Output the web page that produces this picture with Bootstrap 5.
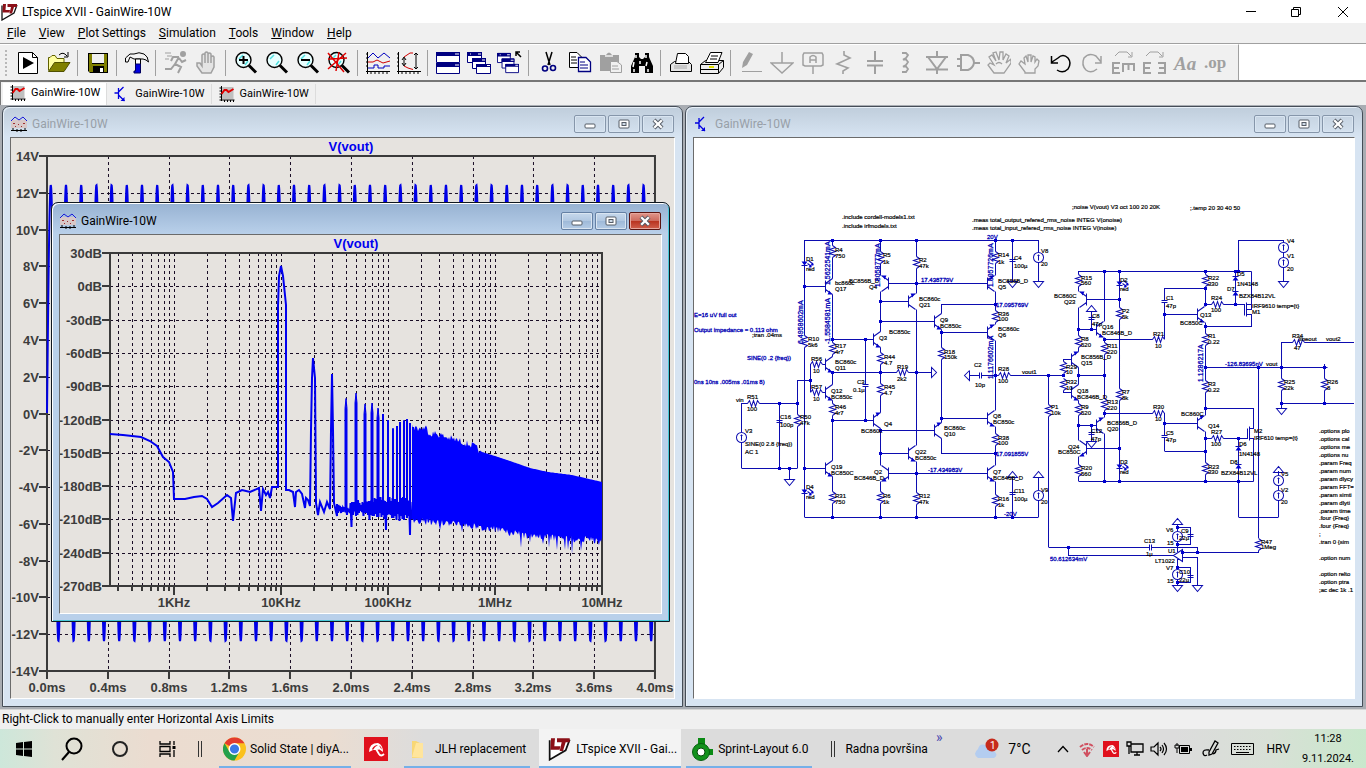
<!DOCTYPE html>
<html lang="en">
<head>
<meta charset="utf-8">
<meta name="viewport" content="width=device-width, initial-scale=1">
<title>LTspice XVII - GainWire-10W</title>
<link href="https://cdn.jsdelivr.net/npm/bootstrap@5.3.0/dist/css/bootstrap.min.css" rel="stylesheet">
<style>
  body { font: 12px/16px Roboto, "Open Sans", sans-serif; color: #000; background: #f0f0f0; }
  button { font: inherit; color: inherit; border: 0; background: none; padding: 0; }
  svg { display: block; flex: none; }
  .app-title { height: 23px; background: #fff; }
  .sys-btn { width: 46px; }
  .app-menu { height: 21px; border-bottom: 1px solid #a0a0a0; padding-left: 2px; }
  .app-menu a { color: #000; text-decoration: none; padding: 0 5px; margin-right: 3px; white-space: nowrap; }
  .tool-row { height: 38px; border-bottom: 2px solid #767676; background: #fff; }
  .tools { background: #f0f0f0; border-right: 1px solid #a0a0a0; padding-right: 7px; border-top: 1px solid #fff; }
  .grip { width: 12px; height: 26px; border-left: 2px dotted #b8b8b8; margin-left: 5px; margin-right: -5px; }
  .tool { width: 31px; height: 34px; display: flex; align-items: center; justify-content: center; }
  .tool-sep { width: 8px; height: 26px; background: linear-gradient(#a0a0a0, #a0a0a0) 3px 0 / 1px 100% no-repeat; }
  .off { color: #a0a0a0; }
  .doc-tabs { height: 23px; padding-left: 2px; border-left: 1px solid #777; font-size: 11px; }
  .doc-tab { height: 20px; padding: 0 6px 0 6px; gap: 5px; display: flex; align-items: center; border-right: 1px solid #dcdcdc; align-self: flex-end; }
  .doc-tab.current { background: #fff; height: 22px; padding-bottom: 2px; }
  .doc-tab:not(.current) { margin-bottom: 1px; }
  .mdi { padding: 1px 3px 2px 2px; gap: 2px; background: #a9adb3; }
  .doc-win { border: 1px solid #454d57; border-radius: 7px 7px 0 0; background: linear-gradient(#bfcddb, #d7e4f2 30px) #d7e4f2; padding: 0 7px 7px; box-shadow: inset 1px 1px 0 #e8f0f8; min-width: 0; }
  .win-left { flex: 681 1 0; }
  .win-right { flex: 678 1 0; }
  .doc-head { height: 30px; padding: 4px 1px 0 1px; color: #98a0a8; gap: 2px; }
  .doc-head .caption-text { flex: 1; margin-left: 3px; }
  .win-btn { width: 32px; height: 18px; border: 1px solid #8696aa; border-radius: 2px; box-shadow: inset 0 0 0 1px #d9e5f1; display: flex; align-items: center; justify-content: center; }
  .client { border: 1px solid #fff; border-top-color: #6b6b6b; border-left-color: #6b6b6b; background: #e6e3df; overflow: hidden; }
  .client.paper { background: #fff; }
  .client svg { width: 100%; height: 100%; }
  .float-win { position: absolute; left: 51px; top: 97px; width: 619px; height: 420px; border-color: #101820; background: linear-gradient(#97b2d2, #b9d0ea 31px) #bad1eb; box-shadow: inset 1px 1px 0 #fff, inset -1px -1px 0 #48c8d8; }
  .float-win .doc-head { height: 31px; color: #000; }
  .float-win .win-btn { border-color: #6480a4; background: linear-gradient(#c6d8ec, #b0c7e1 50%, #9eb9d8 50%, #b5cce6); }
  .float-win .win-btn.shut { border-color: #5a1410; background: linear-gradient(#e0968a, #cc6a5c 50%, #b8321e 50%, #d0604c); box-shadow: inset 0 0 0 1px #e6a79d; }
  .axis-text { font: bold 13px "Liberation Sans", Arial, sans-serif; fill: #3c3c3c; }
  .trace-name { font: bold 13px "Liberation Sans", Arial, sans-serif; fill: #0000f0; }
  .sch text { font: 6px "Liberation Sans", Arial, sans-serif; fill: #000; stroke: #000; stroke-width: .2px; }
  .sch text.op { fill: #0000b4; stroke: #0000b4; stroke-width: .3px; }
  .sch text.amp { font-size: 7px; }
  .status { height: 20px; border-top: 1px solid #d5d5d5; padding: 1px 2px 0; }
  .taskbar { height: 40px; background: linear-gradient(90deg, #cde7da 0, #dfe2d6 4%, #ebdcd0 11%, #ebddd1 24%, #dcdcdc 31%, #dcdcdc 86%, #d8e0d6 93%, #c9e8cc 100%); white-space: nowrap; }
  .tb-icon { width: 48px; height: 40px; display: flex; align-items: center; justify-content: center; }
  .tb-app { height: 40px; display: flex; align-items: center; gap: 5px; border-bottom: 3px solid #76b0e8; padding: 3px 4px 0; margin-right: 5px; }
  .tb-app.chrome-app { padding-right: 2px; gap: 4px; }
  .tb-app.current { background: #f3f3f3; }
  .tray { height: 40px; width: 24px; display: flex; align-items: center; justify-content: center; }
  .temp { font-size: 14px; }
  .clock { font-size: 11px; }
  .more-mark { color: #4a4ab0; font-size: 14px; }
</style>
</head>
<body class="d-flex flex-column vh-100 overflow-hidden">

<svg width="0" height="0" class="position-absolute" aria-hidden="true">
  <defs>
    <symbol id="lt" viewBox="0 0 18 18"><path d="M2 2.500V17L14 10L17 2" fill="#fff" stroke="#111" stroke-width="1.300"/><path d="M3 1H6L5.500 7H10L9.500 9.500H2.500ZM7.500 1H17V4H14L12 10.500H9.500L11 4H7.500Z" fill="#8c1018"/></symbol>
    <symbol id="wave" viewBox="0 0 16 16"><path d="M3 1H15V13H3Z" fill="#c0c0c0"/><path d="M3 0V15M1 14H16M1 2H3M1 5H3M1 8H3M1 11H3M6 14V16M9 14V16M12 14V16M15 14V16" stroke="#000" fill="none"/><path d="M3 8L6 4H8L10 6L15 3" stroke="#e00000" stroke-width="2" fill="none"/></symbol>
    <symbol id="npn" viewBox="0 0 16 16"><path d="M5 2V13M1 7H5M5 6L10 1M5 9L11 15" stroke="#0000e0" stroke-width="1.300" fill="none"/><path d="M11 15V11L7 15Z" fill="#0000e0"/></symbol>
    <symbol id="plotdoc" viewBox="0 0 16 16"><path d="M0 4H16V12H0Z" fill="#d8c8c8"/><path d="M0 5L4 1L8 4L12 1L16 5" stroke="#1818d8" fill="none"/><path d="M2 7.500H4M7 8.500H8M12 7.500H14M4 10.500H5M10 10.500H11" stroke="#a03030"/><path d="M0 14.500H16M2 12V15M6 13V16M10 13V16M14 12V15" stroke="#000"/></symbol>
    <symbol id="bmin" viewBox="0 0 14 12"><rect x="2" y="6" width="10" height="4" rx="1" fill="#fff" stroke="#555c66"/></symbol>
    <symbol id="bmax" viewBox="0 0 14 12"><rect x="2" y="2" width="10" height="8" rx="1" fill="#fff" stroke="#555c66"/><rect x="5" y="4.500" width="4" height="3" fill="#cfdbe8" stroke="#555c66"/></symbol>
    <symbol id="bcls" viewBox="0 0 14 12"><path d="M3 2L11 10M11 2L3 10" stroke="#555c66" stroke-width="4.200"/><path d="M3.200 2.200L10.800 9.800M10.800 2.200L3.200 9.800" stroke="#fff" stroke-width="2.300"/></symbol>
    <symbol id="lens" viewBox="0 0 24 24"><circle cx="9.500" cy="9" r="7.500" fill="#e8ffff" stroke="#000" stroke-width="1.400"/><path d="M5 8L9 4M11 14L14 10" stroke="#50e0e0" stroke-width="1.500"/><path d="M15 14.500L22 21.500" stroke="#000" stroke-width="3"/></symbol>
    <symbol id="cascade" viewBox="0 0 24 24"><g fill="#fff" stroke="#000080"><path d="M.5 1.500H14.500V11.500H.5Z"/><path d="M5.500 7.500H18.500V17.500H5.500Z"/><path d="M9.500 13.500H23.500V22.500H9.500Z"/></g><path d="M0 1H15V5H0ZM5 7H19V11H5ZM9 13H24V16H9Z" fill="#000080"/><path d="M11 3H14M15 9H18M20 14.500H23M3 3H4" stroke="#fff"/></symbol>
    <symbol id="avira" viewBox="0 0 24 24"><path d="M0 0H24V24H0Z" fill="#e0101c"/><path d="M5 15Q5 6 14 6Q19 8 19 15L15.500 12.500L12 13L9 13Z" fill="#fff"/><path d="M8 12Q10 8 14 8Q10 10 9 13ZM15 8.500Q18 10 17.500 12.500Z" fill="#e0101c"/><path d="M12 12L15 17Q17 20 20 17" stroke="#fff" stroke-width="1.800" fill="none"/></symbol>
  </defs>
</svg>

<header class="app-title d-flex align-items-center flex-shrink-0">
  <svg width="18" height="18" class="me-1"><use href="#lt"/></svg>
  <span class="flex-grow-1">LTspice XVII - GainWire-10W</span>
  <button class="sys-btn" aria-label="Minimize"><svg width="12" height="12" class="m-auto"><path d="M1 5.500H11" stroke="#000"/></svg></button>
  <button class="sys-btn" aria-label="Restore"><svg width="12" height="12" class="m-auto"><path d="M.5 3.500H7.500V10.500H.5ZM2.500 3.500V1.500H9.500V8.500H7.500" stroke="#000" fill="none"/></svg></button>
  <button class="sys-btn" aria-label="Close"><svg width="12" height="12" class="m-auto"><path d="M1 1L11 11M11 1L1 11" stroke="#000"/></svg></button>
</header>

<nav class="app-menu d-flex align-items-center flex-shrink-0">
  <a href="#"><u>F</u>ile</a><a href="#"><u>V</u>iew</a><a href="#"><u>P</u>lot Settings</a><a href="#"><u>S</u>imulation</a><a href="#"><u>T</u>ools</a><a href="#"><u>W</u>indow</a><a href="#"><u>H</u>elp</a>
</nav>

<div class="tool-row d-flex flex-shrink-0">
  <div class="tools d-flex align-items-center">
    <span class="grip"></span>
    <button class="tool" aria-label="Run"><svg width="24" height="24"><path d="M2.500 1.500H16.500L21.500 6.500V22.500H2.500Z" fill="#fff" stroke="#000"/><path d="M16.500 1.500V6.500H21.500" fill="none" stroke="#000"/><path d="M7 6L18 12L7 18Z"/></svg></button>
    <button class="tool" aria-label="Open"><svg width="24" height="24"><path d="M1.500 19.500V6.500H3L5 4.500H8L10 7.500H17V11" fill="#ffffa0" stroke="#606000"/><path d="M1.500 20.500L7.500 11.500H23L17 20.500Z" fill="#808000" stroke="#505000"/><path d="M12 4Q16 0 20 5M21 1V6H17" fill="none" stroke="#000"/></svg></button>
    <span class="tool-sep"></span>
    <button class="tool" aria-label="Save"><svg width="24" height="24"><path d="M2 2H22V22H4L2 20Z" fill="#000"/><path d="M3 3H6V13H18V3H21V21H3Z" fill="#808000"/><path d="M6 3H18V12H6Z" fill="#f0f0f0"/><path d="M7 15H18V22H7Z"/><path d="M14 17H17V21H14Z" fill="#fff"/></svg></button>
    <span class="tool-sep"></span>
    <button class="tool" aria-label="Control panel"><svg width="24" height="24"><path d="M.5 7L5 3H9Q14 .5 19 3Q23 5 23.500 11L21 9L18 8H9L5 6L3 11H.5Z" fill="#f4f4f4" stroke="#000"/><path d="M10.500 8H15.500V14H10.500Z" fill="#fff" stroke="#000"/><path d="M10.500 13H15.500V22H9V20H10.500Z" fill="#0000e0" stroke="#000060"/></svg></button>
    <span class="tool-sep"></span>
    <button class="tool off" aria-label="Run simulation"><svg width="24" height="24" fill="none" stroke="#a0a0a0" stroke-width="2"><circle cx="19" cy="3" r="2" fill="#a0a0a0"/><path d="M15 6L11 13L17 16L14 22M11 13L7 18H1M15 6H9L7 10M15 7L18 11L22 9"/><path d="M1 2H7M3 5H8M1 8H5" stroke-width="1"/></svg></button>
    <button class="tool off" aria-label="Halt"><svg width="24" height="24" fill="#e4e4e4" stroke="#a0a0a0" stroke-width="1.500"><path d="M7 22L2 15V12H5L7 15V4Q8.500 2 10 4V12V2Q11.500 0 13 2V12V3Q14.500 1 16 3V12V6Q18 4 19 6V16L16 22Z"/></svg></button>
    <span class="tool-sep"></span>
    <button class="tool" aria-label="Zoom in"><svg width="24" height="24"><use href="#lens"/><path d="M5 9H14M9.500 5V13" stroke="#000" stroke-width="2"/></svg></button>
    <button class="tool" aria-label="Pan"><svg width="24" height="24"><use href="#lens"/></svg></button>
    <button class="tool" aria-label="Zoom out"><svg width="24" height="24"><use href="#lens"/><path d="M5 9H14" stroke="#000" stroke-width="2"/></svg></button>
    <button class="tool" aria-label="Zoom full"><svg width="24" height="24"><use href="#lens"/><path d="M1 2L17 21M19 2L1 18M1 8L20 7M12 1L9 20" stroke="#e00000" stroke-width="1.500"/></svg></button>
    <span class="tool-sep"></span>
    <button class="tool" aria-label="Autorange"><svg width="26" height="24" fill="none"><path d="M2.500 1V23M1 20.500H25M1 3H3M1 7H3M1 11H3M1 15H3M6 20V23M10 20V23M14 20V23M18 20V23M22 20V23" stroke="#000"/><path d="M3 7L8 2L13 7L19 2L25 7" stroke="#0000c0"/><path d="M3 11H8L12 9L18 12L25 10" stroke="#d00000"/><path d="M3 17H9V14H13V17H19V15H25" stroke="#0000c0"/></svg></button>
    <button class="tool" aria-label="Plot limits"><svg width="26" height="24" fill="none"><path d="M2.500 1V23M1 20.500H25M1 3H3M1 7H3M1 11H3M1 15H3M6 20V23M10 20V23M14 20V23M18 20V23M22 20V23M8 7V14M6 9L8 6L10 9M6 12L8 15L10 12M20 2V18M18 4L20 2L22 4M18 16L20 18L22 16" stroke="#000"/><path d="M8 6L14 2H17M8 15L12 17L17 18.500" stroke="#d00000"/></svg></button>
    <span class="tool-sep"></span>
    <button class="tool" aria-label="Tile"><svg width="24" height="24"><path d="M.5 1.500H23.500V11.500H.5ZM.5 12.500H23.500V22.500H.5Z" fill="#fff" stroke="#000080"/><path d="M0 1H24V5H0ZM0 12H24V16H0Z" fill="#000080"/><path d="M19 3H23M19 14H23" stroke="#fff"/></svg></button>
    <button class="tool" aria-label="Cascade"><svg width="24" height="24"><use href="#cascade"/></svg></button>
    <button class="tool" aria-label="Close all"><svg width="26" height="24"><use href="#cascade" width="22" height="24"/><path d="M24 6L19 1M19 5V1H23" stroke="#000" fill="none" stroke-width="1.500"/></svg></button>
    <span class="tool-sep"></span>
    <button class="tool" aria-label="Cut"><svg width="24" height="24" fill="none"><path d="M9 1L13 14M15 1L11 14" stroke="#000" stroke-width="1.500"/><circle cx="8" cy="17.500" r="2.500" stroke="#000080" stroke-width="1.600"/><circle cx="16" cy="17" r="2.500" stroke="#000080" stroke-width="1.600"/></svg></button>
    <button class="tool" aria-label="Copy"><svg width="24" height="24" fill="#fff"><path d="M1.500 1.500H9L13.500 6V16.500H1.500Z" stroke="#000"/><path d="M3 6H8M3 9H9M3 12H9" stroke="#000"/><path d="M10.500 6.500H18L22.500 11V20.500H10.500Z" stroke="#000080" stroke-width="1.300"/><path d="M12 11H17M12 14H20M12 17H20" stroke="#000080"/></svg></button>
    <button class="tool off" aria-label="Paste"><svg width="24" height="24"><path d="M1 4H7Q10 -1 13 4H20V20H1Z" fill="#a0a0a0"/><path d="M6 5H14" stroke="#ddd" stroke-width="2"/><path d="M11.500 10.500H18L22.500 14V21.500H11.500Z" fill="#f0f0f0" stroke="#a0a0a0"/><path d="M13 15H19M13 18H20" stroke="#a0a0a0"/></svg></button>
    <button class="tool" aria-label="Find"><svg width="24" height="24"><path d="M5 2H9V6L11 8H13L15 6V2H19V6L23 15V22H15V15H9V22H1V15L5 6Z"/><path d="M6 4V7M16 4V7M4 11L3 16M10 10V13M17 11L16 15M4 18V21M18 18V21" stroke="#fff" stroke-width="1.500"/></svg></button>
    <span class="tool-sep"></span>
    <button class="tool" aria-label="Print"><svg width="24" height="24"><path d="M1.500 13.500L5.500 10.500H19.500L22.500 13.500V20.500H1.500Z" fill="#e6e6e6" stroke="#000"/><path d="M6.500 12.500L8.500 2.500H16.500L19.500 5.500V12.500Z" fill="#fff" stroke="#000"/><path d="M5 17H18M5 15H18" stroke="#aaa"/></svg></button>
    <button class="tool" aria-label="Print setup"><svg width="24" height="24"><path d="M.5 13.500L5.500 9.500H23.500V16.500L18.500 22.500H.5Z" fill="#eee" stroke="#000"/><path d="M.5 13.500H18.500L23.500 9.500M18.500 13.500V22M1 18.500H18" stroke="#000" fill="none"/><path d="M5.500 11.500L10.500 1.500H22L18 11.500Z" fill="#fff" stroke="#000"/><path d="M11 5H18M10 8H17" stroke="#000"/><path d="M9 16H14" stroke="#e0e000" stroke-width="2"/></svg></button>
    <span class="tool-sep"></span>
    <button class="tool off" aria-label="Wire"><svg width="24" height="24"><path d="M3 17L4 11L10 1L14 3L8 14Z" fill="#a0a0a0"/><path d="M3 20.500H23" stroke="#a0a0a0"/></svg></button>
    <button class="tool off" aria-label="Ground"><svg width="24" height="24" fill="none" stroke="#a0a0a0" stroke-width="1.500"><path d="M12 1V12M1 12H23L12 22Z"/></svg></button>
    <button class="tool off" aria-label="Label net"><svg width="24" height="24" fill="none" stroke="#a0a0a0" stroke-width="1.500"><path d="M3 2H21L22 4V14L20 15H4L2 14V4ZM12 15V23M9 12V6Q12 3 15 6V12M9 9H15"/></svg></button>
    <button class="tool off" aria-label="Resistor"><svg width="24" height="24" fill="none" stroke="#a0a0a0" stroke-width="1.600"><path d="M12 0V4L18 7L5 13L16 17L11 20V23"/></svg></button>
    <button class="tool off" aria-label="Capacitor"><svg width="24" height="24" fill="none" stroke="#a0a0a0" stroke-width="2"><path d="M12 0V9M12 15V23M4 10H20M4 14.500H20"/></svg></button>
    <button class="tool off" aria-label="Inductor"><svg width="24" height="24" fill="none" stroke="#a0a0a0" stroke-width="1.800"><path d="M8 2H12L14 4L12 7L9 8.500H12L14 11L12 14L9 15.500H12L14 18L12 21H8"/></svg></button>
    <button class="tool off" aria-label="Diode"><svg width="24" height="24" fill="none" stroke="#a0a0a0" stroke-width="2"><path d="M12 0V6M1 6H23M3 6L12 18L21 6M1 18.500H23M12 18V23"/></svg></button>
    <button class="tool off" aria-label="Component"><svg width="24" height="24" fill="none" stroke="#a0a0a0" stroke-width="2"><path d="M5 4H12Q18 6 18 12Q17 17 12 19H5ZM1 8H5M1 15H5M18 12H24"/></svg></button>
    <button class="tool off" aria-label="Move"><svg width="24" height="24" fill="none" stroke="#a0a0a0" stroke-width="1.300"><path d="M7 22L1 14L3 12L7 14L2 6L5 4L9 10L6 2L9 1L12 9L13 1H16V9L19 3L22 5L19 12L24 8V12L17 22ZM9 13Q12 10 15 13"/></svg></button>
    <button class="tool off" aria-label="Drag"><svg width="24" height="24" fill="none" stroke="#a0a0a0" stroke-width="1.300"><path d="M7 21L1 13L3 10L7 13L6 7L8 5L10 11V4H13V11L15 5L17 6V11L19 8L21 10L20 15L17 18V22H7Z"/></svg></button>
    <button class="tool" aria-label="Undo"><svg width="24" height="24" fill="none" stroke="#000" stroke-width="1.500"><path d="M2.500 5V12H9M3 11L9 7Q14 2 19 7Q23 12 19 18Q14 23 8 19"/></svg></button>
    <button class="tool off" aria-label="Redo"><svg width="24" height="24" fill="none" stroke="#a0a0a0" stroke-width="1.500"><path d="M21 5V12H15M21 11L16 5Q9 1 4 7Q1 14 6 19Q11 23 17 18"/></svg></button>
    <button class="tool off" aria-label="Rotate"><svg width="26" height="24" fill="none" stroke="#a0a0a0"><path d="M5 5L9 1H17L21 5M22 1V6H18"/><path d="M10 12H3V22H10M3 17H9M13 21V13H24V20M18.500 13V19" stroke-width="2"/></svg></button>
    <button class="tool off" aria-label="Mirror"><svg width="26" height="24" fill="none" stroke="#a0a0a0"><path d="M5 5L9 1H17L21 5M22 1V6H18"/><path d="M10 12H3V22H10M3 17H9M17 12H24V22H17M18 17H24" stroke-width="2"/></svg></button>
    <button class="tool off" aria-label="Text"><svg width="26" height="24"><text x="2" y="19" font-family="Liberation Serif, serif" font-style="italic" font-weight="bold" font-size="19" fill="#a0a0a0">Aa</text></svg></button>
    <button class="tool off" aria-label="SPICE directive"><svg width="26" height="24"><text x="1" y="17" font-family="Liberation Serif, serif" font-weight="bold" font-size="17" fill="#a0a0a0">.op</text></svg></button>
  </div>
</div>

<div class="doc-tabs d-flex flex-shrink-0">
  <button class="doc-tab current"><svg width="17" height="16"><use href="#wave"/></svg>GainWire-10W</button>
  <button class="doc-tab"><svg width="17" height="16"><use href="#npn"/></svg>GainWire-10W</button>
  <button class="doc-tab"><svg width="17" height="16"><use href="#wave"/></svg>GainWire-10W</button>
</div>

<main class="mdi d-flex flex-grow-1 position-relative">
  <section class="doc-win win-left d-flex flex-column">
    <div class="doc-head d-flex align-items-center flex-shrink-0">
      <svg width="16" height="16"><use href="#plotdoc"/></svg><span class="caption-text">GainWire-10W</span>
      <button class="win-btn" aria-label="Minimize"><svg width="14" height="12"><use href="#bmin"/></svg></button>
      <button class="win-btn" aria-label="Maximize"><svg width="14" height="12"><use href="#bmax"/></svg></button>
      <button class="win-btn" aria-label="Close"><svg width="14" height="12"><use href="#bcls"/></svg></button>
    </div>
    <div class="client flex-grow-1"><svg id="tran" viewBox="11 138 663 560"></svg></div>
  </section>
  <section class="doc-win win-right d-flex flex-column">
    <div class="doc-head d-flex align-items-center flex-shrink-0">
      <svg width="16" height="16"><use href="#npn"/></svg><span class="caption-text">GainWire-10W</span>
      <button class="win-btn" aria-label="Minimize"><svg width="14" height="12"><use href="#bmin"/></svg></button>
      <button class="win-btn" aria-label="Maximize"><svg width="14" height="12"><use href="#bmax"/></svg></button>
      <button class="win-btn" aria-label="Close"><svg width="14" height="12"><use href="#bcls"/></svg></button>
    </div>
    <div class="client paper flex-grow-1"><svg id="sch" class="sch" viewBox="694 138 660 560"></svg></div>
  </section>
  <section class="doc-win float-win d-flex flex-column">
    <div class="doc-head d-flex align-items-center flex-shrink-0">
      <svg width="16" height="16"><use href="#plotdoc"/></svg><span class="caption-text">GainWire-10W</span>
      <button class="win-btn" aria-label="Minimize"><svg width="14" height="12"><use href="#bmin"/></svg></button>
      <button class="win-btn" aria-label="Maximize"><svg width="14" height="12"><use href="#bmax"/></svg></button>
      <button class="win-btn shut" aria-label="Close"><svg width="14" height="12"><use href="#bcls"/></svg></button>
    </div>
    <div class="client flex-grow-1"><svg id="fft" viewBox="60 235 601 378"></svg></div>
  </section>
</main>

<div class="status flex-shrink-0">Right-Click to manually enter Horizontal Axis Limits</div>

<footer class="taskbar d-flex align-items-center flex-shrink-0">
  <button class="tb-icon" aria-label="Start"><svg width="16" height="16"><path d="M0 2L7 1V7.500H0ZM8 1L16 0V7.500H8ZM0 8.500H7V15L0 14ZM8 8.500H16V16L8 15Z"/></svg></button>
  <button class="tb-icon" aria-label="Search"><svg width="24" height="24" fill="none" stroke="#000" stroke-width="2"><circle cx="14" cy="9" r="7.500"/><path d="M9 15L2 23"/></svg></button>
  <button class="tb-icon" aria-label="Cortana"><svg width="18" height="18"><circle cx="9" cy="9" r="7" fill="none" stroke="#222" stroke-width="2"/></svg></button>
  <button class="tb-icon" aria-label="Task view"><svg width="18" height="16" fill="none" stroke="#000" stroke-width="1.300"><path d="M1 0V3H11V0M1 16V13H11V16M1 5.500H11V10.500H1ZM15 0V4M15 9V16"/><path d="M15 5V8" stroke-width="3"/></svg></button>
  <svg width="27" height="18"><path d="M6.500 1V17M9.500 1V17" stroke="#333"/></svg>
  <button class="tb-app chrome-app"><svg width="23" height="24" viewBox="0 0 24 24"><circle cx="12" cy="12" r="12" fill="#fbc11c"/><path d="M12 12L1.600 6A12 12 0 0 1 22.400 6H12Z" fill="#e33b2e"/><path d="M12 12L6.800 15L1.600 6A12 12 0 0 0 12 24L17 15Z" fill="#23a04c"/><circle cx="12" cy="12" r="5.500" fill="#3b78e7" stroke="#fff" stroke-width="1.500"/></svg>Solid State | diyA...</button>
  <button class="mx-2" aria-label="Avira"><svg width="24" height="24"><use href="#avira"/></svg></button>
  <button class="tb-app ms-2 ps-1"><svg width="22" height="20"><path d="M4 2H8L14 5V19H4Z" fill="#f8d775"/><path d="M8 4H15V19L4 18Z" fill="#ffe59c"/></svg>JLH replacement</button>
  <button class="tb-app current ms-1 ps-2"><svg width="24" height="24" viewBox="0 0 18 18"><use href="#lt"/></svg>LTspice XVII - Gai...</button>
  <button class="tb-app"><svg width="23" height="24"><path d="M8 1H15V9H8ZM17 12H23V18H17Z" fill="#0a8a14"/><circle cx="11" cy="15" r="8.500" fill="#12921c" stroke="#066010"/><circle cx="11" cy="15" r="4" fill="#fff" stroke="#044a0a"/></svg>Sprint-Layout 6.0</button>
  <svg width="24" height="18"><path d="M14.500 1V17M17.500 1V17" stroke="#333"/></svg>
  <button class="ms-1">Radna površina</button>
  <span class="more-mark align-self-start ms-2">»</span>
  <button class="d-flex align-items-center gap-2 ms-auto me-3 pe-1"><svg width="26" height="22"><path d="M4 20Q-2 16 4 11Q6 4 13 8Q20 8 20 13Q25 17 20 20Z" fill="#b4cdf0"/><circle cx="18" cy="7" r="6.500" fill="#c62a1c"/><text x="16" y="11" font-size="10" fill="#fff">1</text></svg><span class="temp">7°C</span></button>
  <button class="tray" aria-label="Show hidden icons"><svg width="12" height="8"><path d="M1 7L6 1.500L11 7" fill="none" stroke="#000" stroke-width="1.300"/></svg></button>
  <button class="tray" aria-label="Connection"><svg width="16" height="16" fill="none" stroke="#d05060" stroke-width="2"><path d="M1 6Q8 0 15 6M3 9Q8 5 13 9" stroke-dasharray="4 1"/><path d="M8 8V14M5 11L8 15L11 11"/></svg></button>
  <button class="tray" aria-label="Avira status"><svg width="16" height="16"><use href="#avira"/></svg></button>
  <button class="tray" aria-label="Network"><svg width="18" height="16" fill="none" stroke="#000" stroke-width="1.300"><path d="M5 3H17V11H5ZM8 14H14M11 11V14M1 1H5V5H1ZM3 5V13"/></svg></button>
  <button class="tray" aria-label="Volume"><svg width="18" height="16" fill="none" stroke="#000" stroke-width="1.200"><path d="M1 6H4L8 2V14L4 10H1ZM10 6Q12 8 10 10M12 4Q15 8 12 12M14 2Q19 8 14 14"/></svg></button>
  <button class="tray" aria-label="Battery"><svg width="18" height="16"><path d="M5.500 4.500H15.500V12.500H5.500Z" fill="none" stroke="#000"/><path d="M7 6H14V11H7Z"/><path d="M3 5V2M1 4H5V7H1ZM3 7V12" stroke="#000" fill="none"/><path d="M17 7V10" stroke="#000" stroke-width="2"/></svg></button>
  <button class="tray mx-1" aria-label="Ink"><svg width="18" height="18" fill="none" stroke="#000" stroke-width="1.300"><path d="M7 12L13 1L16 3L10 14L7 15ZM7 10Q1 9 1 13Q2 17 5 15M11 14Q14 13 14 10L17 9"/></svg></button>
  <button class="tray mx-1" aria-label="Touch keyboard"><svg width="23" height="14"><path d="M.5 1.500H22.500V12.500H.5Z" fill="none" stroke="#000"/><path d="M3 4.500H21M3 7.500H21" stroke="#000" stroke-dasharray="1.500 1.500"/><path d="M5 10.500H18" stroke="#000"/></svg></button>
  <button class="ms-1 me-1 ps-1">HRV</button>
  <button class="clock text-center ms-2 me-2 pe-1"><span class="d-block">11:28</span><span class="d-block mt-1">9.11.2024.</span></button>
</footer>

<script src="https://cdn.jsdelivr.net/npm/bootstrap@5.3.0/dist/js/bootstrap.bundle.min.js"></script>
<script>
const path = (d, stroke, w = 1, extra = '') => `<path d="${d}" fill="none" stroke="${stroke}" stroke-width="${w}" ${extra}/>`;
const label = (x, y, s, cls, anchor = 'start') => `<text x="${x}" y="${y}" class="${cls}" text-anchor="${anchor}">${s}</text>`;

// Transient plot: 10 kHz sine, 4 ms
(function () {
  const x0 = 47, x1 = 655, y0 = 156, y1 = 671;
  let grid = '', ticks = '', out = '';
  for (let i = 0; i <= 10; i++) {
    const x = Math.round(x0 + i * (x1 - x0) / 10);
    if (i > 0 && i < 10) grid += `M${x + .5} ${y0}V${y1}`;
    ticks += `M${x} ${y1}v8`;
    out += label(x, 692, (i * .4).toFixed(1) + 'ms', 'axis-text', 'middle');
  }
  for (let i = 0; i <= 14; i++) {
    const y = Math.round(y0 + i * (y1 - y0) / 14);
    if (i > 0 && i < 14) grid += `M${x0} ${y + .5}H${x1}`;
    ticks += `M${x0 - 8} ${y}h8`;
    out += label(39, y + 5, (14 - 2 * i) + 'V', 'axis-text', 'end');
  }
  let d = '';
  for (let x = x0; x <= x1; x += .25)
    d += (d ? 'L' : 'M') + x + ' ' + (413 - 228 * Math.cos((x - 50.8) / 15.2 * 2 * Math.PI)).toFixed(1);
  document.getElementById('tran').innerHTML =
    path(grid, '#180c24', 1, 'stroke-dasharray="3 3"') + path(ticks, '#3a3a3a', 2) +
    path(`M${x0} ${y0}H${x1}V${y1}H${x0}Z`, '#3a3a3a', 2) + path(d, '#0000e6', 2) + out +
    label(351, 151, 'V(vout)', 'trace-name', 'middle');
})();

// Spectrum: log frequency axis, 107 px per decade
(function () {
  const x0 = 110, x1 = 602, y0 = 253, y1 = 586, fx = k => 174.3 + 107 * Math.log10(k);
  let grid = '', ticks = '', out = '';
  for (let dec = 0; dec < 5; dec++) for (let m = 1; m < 10; m++) {
    const x = Math.round(fx(m * Math.pow(10, dec - 1)));
    if (x <= x0 || x > x1 - 2) continue;
    grid += `M${x + .5} ${y0}V${y1}`;
    ticks += `M${x} ${y1}v${m === 1 ? 9 : 5}`;
  }
  ticks += `M${x1} ${y1}v9`;
  for (let i = 0; i <= 10; i++) {
    const y = Math.round(y0 + i * 33.3);
    if (i > 0 && i < 10) grid += `M${x0} ${y + .5}H${x1}`;
    ticks += `M${x0 - 8} ${y}h8`;
    out += label(102, y + 5, (30 - 30 * i) + 'dB', 'axis-text', 'end');
  }
  [['1KHz', 174], ['10KHz', 281], ['100KHz', 388], ['1MHz', 495], ['10MHz', 602]].forEach(t => out += label(t[1], 607, t[0], 'axis-text', 'middle'));
  const lowBand = 'M110 434L123 435L141 437L150 441L157 446L163 457L169 462L173 472L174 499H185L194 497L202 496L207 499L212 507L218 503L227 495L231 498L233 521L236 493L242 490L250 492L259 488L261 511L263 489L266 495L268 492L270 498L272 487H278L278 306L279 276L281 266L283 276L286 305L286 490H289L293 492L295 507L296 492L299 490L302 494L305 508L306 498L308 500L310 506L311 430L312 378L313 358L315 378L316 503L318 515L320 502L324 512L327 502L330 509L331 430L332 374L333 430L334 503L337 516';
  let seed = 7;
  const rnd = () => (seed = (seed * 16807) % 2147483647) / 2147483647;
  const lerp = (pts, x) => {
    for (let i = 1; i < pts.length; i++) if (x <= pts[i][0]) {
      const a = pts[i - 1], b = pts[i];
      return a[1] + (b[1] - a[1]) * (x - a[0]) / (b[0] - a[0]);
    }
    return pts[pts.length - 1][1];
  };
  const floor = [[337, 508], [388, 514], [413, 517], [460, 521], [495, 526], [530, 533], [602, 537]];
  const top = [[345, 399], [356, 393], [364, 404], [372, 403], [378, 408], [383, 414], [388, 420], [394, 430], [400, 422], [407, 419], [413, 427], [420, 428], [426, 427], [430, 433], [436, 433], [447, 437], [461, 441], [473, 445], [482, 452], [495, 456], [513, 462], [530, 468], [548, 472], [572, 475], [585, 478], [602, 482]];
  let wide = '', thin = '', noise = '';
  for (let n = 4; n < 18; n++) {
    const x = Math.round(fx(10 * n)), y = lerp(top, x);
    if (n < 9) wide += `M${x - 1} 512V${y + 10}L${x} ${y}L${x + 1} ${y + 10}V512Z`;
    else thin += `M${x} 512V${y}`;
  }
  for (let x = 337; x < 412; x += 1.5)
    noise += `L${x} ${(494 + (x < 350 ? 10 : x < 370 ? 6 : 3) + rnd() * 5).toFixed(0)}L${x + 1} ${(lerp(floor, x) - 1 + (rnd() > .85 ? rnd() * 20 : rnd() * 7)).toFixed(0)}`;
  let fill = 'M412 516';
  for (let x = 412; x <= 602; x += 1)
    fill += `L${x} ${(lerp(top, x) + (x < 480 ? rnd() * 7 - 3 : 0)).toFixed(1)}`;
  for (let x = 602; x >= 412; x -= 1)
    fill += `L${x} ${(lerp(floor, x) + (rnd() > .88 ? rnd() * 19 : rnd() * 7)).toFixed(1)}`;
  document.getElementById('fft').innerHTML =
    path(grid, '#180c24', 1, 'stroke-dasharray="3 3"') + path(ticks, '#3a3a3a', 2) +
    path(`M${x0} ${y0}H${x1}V${y1}H${x0}Z`, '#3a3a3a', 2) +
    path(lowBand + noise, '#0000f0', 2) + path(wide, '#0000f0', 1, 'style="fill:#0000f0"') +
    path(thin, '#0000f0', 2) + `<path d="${fill}Z" fill="#0000ff"/>` + out +
    label(356, 248, 'V(vout)', 'trace-name', 'middle');
})();

// Amplifier schematic
(function () {
  const ink = '#0c0cb0';
  let d = '', solid = '', txt = '';
  const W = (...p) => { d += 'M' + p.join('L'); };
  // a vertical wire at x that breaks at the listed [from, to] spans
  const V = (x, a, b, ...gaps) => { let y = a; gaps.forEach(g => { W(`${x} ${y}`, `${x} ${g[0]}`); y = g[1]; }); W(`${x} ${y}`, `${x} ${b}`); };
  const dot = (...p) => p.forEach(([x, y]) => solid += `M${x - 1.5} ${y - 1.5}h3v3h-3Z`);
  const RV = (x, y) => { d += `M${x} ${y - 6}l3 2l-6 2l6 2l-6 2l6 2l-3 2`; };
  const RH = (x, y) => { d += `M${x - 6} ${y}l2 -3l2 6l2 -6l2 6l2 -6l2 3`; };
  const Q = (x, y, s = 1, up) => { d += `M${x} ${y - 6}V${y + 6}M${x} ${y - 3}l${7 * s} -5M${x} ${y + 3}l${7 * s} 5`; const k = up ? -1 : 1; solid += `M${x + 6 * s} ${y + 8 * k}l${-4 * s} 0l${2 * s} ${-4 * k}Z`; };
  const S = (x, y) => { d += `M${x - 5} ${y}a5 5 0 1 0 10 0a5 5 0 1 0 -10 0M${x} ${y - 3}v6M${x - 1} ${y - 2}h2`; };
  const GD = (x, y) => { d += `M${x - 5} ${y}h10l-5 6Z`; };
  const GU = (x, y) => { d += `M${x - 5} ${y}h10l-5 -6Z`; };
  const CV = (x, y) => { d += `M${x - 3} ${y - 1}h6M${x - 3} ${y + 1}h6`; };
  const CH = (x, y) => { d += `M${x - 1} ${y - 3}v6M${x + 1} ${y - 3}v6`; };
  const D = (x, y, up) => { const k = up ? -1 : 1; solid += `M${x - 3} ${y - 2 * k}h6l-3 ${4 * k}Z`; d += `M${x - 3} ${y + 2 * k}h6`; };
  const led = (x, y) => { D(x, y); d += `M${x + 3} ${y}l4 3M${x + 4} ${y - 3}l5 4`; solid += `M${x + 9} ${y + 2}l-3 0l2 -3ZM${x + 7} ${y + 4}l-3 0l2 -3Z`; };
  const T = (x, y, s, c = '') => { txt += `<text x="${x}" y="${y + 2}" class="${c}">${s}</text>`; };
  const TV = (x, y, s) => { txt += `<text class="op amp" transform="translate(${x} ${y}) rotate(-90)">${s}</text>`; };
  const q = y => [y - 8, y + 8], r = y => [y - 6, y + 6];

  // input stage
  W('804.5 240.5', '1038.5 240.5'); W('804.5 517.5', '1038.5 517.5');
  V(804.5, 240, 517, r(341.5)); led(804.5, 263.5); RV(804.5, 341.5); led(804.5, 491.5);
  V(832.5, 240, 517, r(251.5), q(286.5), r(348.5), q(364.5), q(392.5), r(409.5), q(468.5), r(497.5));
  [251.5, 348.5, 409.5, 497.5].forEach(y => RV(832.5, y));
  [286.5, 364.5, 392.5, 468.5].forEach(y => Q(825.5, y));
  W('804.5 286.5', '825.5 286.5'); W('804.5 468.5', '825.5 468.5');
  V(880.5, 240, 517, r(257.5), q(283.5), q(339.5), r(358.5), r(389.5), q(420.5), q(473.5), r(497.5));
  [257.5, 358.5, 389.5, 497.5].forEach(y => RV(880.5, y));
  Q(888.5, 283.5, -1, 1); Q(873.5, 339.5); Q(873.5, 420.5, 1, 1); Q(888.5, 473.5, -1);
  W('832.5 339.5', '873.5 339.5'); W('832.5 420.5', '873.5 420.5'); V(865.5, 339, 420, [384, 386]); CV(865.5, 385.5);
  W('888.5 283.5', '987.5 283.5'); W('888.5 473.5', '987.5 473.5');
  W('880.5 301.5', '908.5 301.5'); W('880.5 321.5', '934.5 321.5'); W('880.5 430.5', '934.5 430.5'); W('880.5 453.5', '908.5 453.5');
  W('832.5 372.5', '896.5 372.5'); RH(902.5, 372.5); W('908.5 372.5', '931.5 372.5', '931.5 367.5', '936.5 372.5', '931.5 377.5', '931.5 372.5');
  V(916.5, 240, 517, r(262.5), q(301.5), q(453.5), r(498.5)); RV(916.5, 262.5); RV(916.5, 498.5); Q(908.5, 301.5, 1, 1); Q(908.5, 453.5);
  V(941.5, 304, 454, q(321.5), r(353.5), q(430.5)); RV(941.5, 353.5); Q(934.5, 321.5); Q(934.5, 430.5, 1, 1);
  W('941.5 304.5', '995.5 304.5'); W('941.5 453.5', '995.5 453.5'); W('941.5 332.5', '987.5 332.5'); W('941.5 418.5', '987.5 418.5');
  V(995.5, 240, 517, r(257.5), q(283.5), r(316.5), q(332.5), q(418.5), r(439.5), q(473.5), r(500.5));
  [257.5, 316.5, 439.5, 500.5].forEach(y => RV(995.5, y));
  Q(987.5, 283.5, 1, 1); Q(987.5, 332.5, 1, 1); Q(987.5, 418.5); Q(987.5, 473.5);
  V(1012.5, 240, 281); CV(1012.5, 260.5); GD(1012.5, 281.5); V(1038.5, 240, 281, [252, 262]); S(1038.5, 257.5); GD(1038.5, 281.5);
  V(1012.5, 477, 517); CV(1012.5, 493.5); GU(1012.5, 477.5); V(1038.5, 477, 517, [490, 500]); S(1038.5, 495.5); GU(1038.5, 477.5);
  W('969.5 375.5', '979.5 375.5'); W('969.5 370.5', '964.5 375.5', '969.5 380.5', '969.5 370.5'); CH(980.5, 375.5); W('981.5 375.5', '998.5 375.5'); RH(1004.5, 375.5); W('1010.5 375.5', '1063.5 375.5');
  dot([832.5, 240.5], [880.5, 240.5], [916.5, 240.5], [995.5, 240.5], [1012.5, 240.5], [832.5, 517.5], [880.5, 517.5], [916.5, 517.5], [995.5, 517.5], [1012.5, 517.5],
    [804.5, 286.5], [804.5, 468.5], [832.5, 339.5], [832.5, 372.5], [832.5, 420.5], [865.5, 339.5], [865.5, 420.5], [880.5, 301.5], [880.5, 321.5], [880.5, 372.5], [880.5, 430.5], [880.5, 453.5],
    [916.5, 283.5], [916.5, 372.5], [916.5, 473.5], [941.5, 332.5], [941.5, 418.5], [995.5, 304.5], [995.5, 375.5], [995.5, 453.5], [1048.5, 375.5], [1063.5, 375.5]);
  // signal source
  V(741.5, 403, 468, [432, 442]); S(741.5, 437.5); W('741.5 403.5', '747.5 403.5'); RH(753.5, 403.5); W('759.5 403.5', '797.5 403.5'); W('741.5 468.5', '797.5 468.5');
  V(779.5, 403, 468); CV(779.5, 421.5); V(797.5, 380, 468, r(420.5)); RV(797.5, 420.5); W('797.5 380.5', '810.5 380.5'); V(810.5, 364, 392); RH(816.5, 364.5); RH(816.5, 392.5); W('822.5 364.5', '825.5 364.5'); W('822.5 392.5', '825.5 392.5');
  V(789.5, 468, 479); GD(789.5, 479.5); dot([779.5, 403.5], [797.5, 403.5], [779.5, 468.5], [789.5, 468.5], [810.5, 380.5]);
  // feedback servo
  V(1048.5, 375, 547, r(410.5)); RV(1048.5, 410.5); W('1048.5 547.5', '1149.5 547.5'); CH(1150.5, 547.5); W('1151.5 547.5', '1197.5 547.5', '1197.5 552.5');
  W('1068.5 547.5', '1068.5 555.5', '1173.5 555.5'); W('1173.5 555.5', '1182.5 549.5', '1182.5 561.5', '1173.5 555.5');
  W('1182.5 552.5', '1258.5 552.5', '1258.5 550.5'); RV(1258.5, 544.5); V(1258.5, 367, 538); W('1182.5 557.5', '1197.5 557.5', '1197.5 585.5'); GD(1197.5, 585.5);
  GU(1177.5, 524.5); V(1177.5, 524, 552, [531, 541]); S(1177.5, 536.5); W('1177.5 527.5', '1190.5 527.5', '1190.5 544.5', '1177.5 544.5'); CV(1190.5, 535.5);
  V(1177.5, 558, 585, [569, 579]); S(1177.5, 574.5); W('1177.5 567.5', '1190.5 567.5', '1190.5 582.5', '1177.5 582.5'); CV(1190.5, 576.5); GD(1177.5, 585.5);
  dot([1068.5, 547.5], [1197.5, 552.5], [1182.5, 552.5], [1177.5, 527.5], [1177.5, 544.5], [1177.5, 567.5], [1177.5, 582.5]);
  // driver stage
  W('1078.5 271.5', '1251.5 271.5'); W('1078.5 481.5', '1253.5 481.5');
  V(1078.5, 271, 481, r(280.5), q(299.5), r(341.5), q(359.5), q(392.5), r(409.5), q(448.5), r(470.5));
  [280.5, 341.5, 409.5, 470.5].forEach(y => RV(1078.5, y));
  Q(1086.5, 299.5, -1, 1); Q(1071.5, 359.5, 1, 1); Q(1071.5, 392.5); Q(1086.5, 448.5, -1);
  W('1086.5 299.5', '1119.5 299.5'); W('1086.5 448.5', '1119.5 448.5'); W('1071.5 359.5', '1063.5 359.5', '1063.5 361.5'); RV(1063.5, 367.5); RV(1063.5, 384.5); W('1063.5 390.5', '1063.5 392.5', '1071.5 392.5');
  W('1078.5 375.5', '1104.5 375.5'); GU(1091.5, 311.5); V(1091.5, 311, 329); CV(1091.5, 318.5); W('1078.5 329.5', '1096.5 329.5'); W('1078.5 425.5', '1096.5 425.5'); V(1091.5, 425, 441); CV(1091.5, 433.5); GD(1091.5, 441.5);
  V(1104.5, 271, 481, q(329.5), r(348.5), r(404.5), q(425.5)); RV(1104.5, 348.5); RV(1104.5, 404.5); Q(1096.5, 329.5); Q(1096.5, 425.5, 1, 1);
  V(1119.5, 271, 481, r(313.5), r(394.5)); led(1119.5, 283.5); RV(1119.5, 313.5); RV(1119.5, 394.5); led(1119.5, 466.5);
  W('1104.5 339.5', '1152.5 339.5'); RH(1158.5, 339.5); V(1164.5, 288, 339, [300, 302]); CV(1164.5, 301.5); W('1164.5 288.5', '1205.5 288.5'); W('1164.5 314.5', '1197.5 314.5');
  W('1104.5 413.5', '1152.5 413.5'); RH(1158.5, 413.5); V(1164.5, 413, 451, [435, 437]); CV(1164.5, 436.5); W('1164.5 423.5', '1197.5 423.5'); W('1164.5 451.5', '1205.5 451.5');
  dot([1104.5, 271.5], [1119.5, 271.5], [1205.5, 271.5], [1235.5, 271.5], [1238.5, 271.5], [1119.5, 299.5], [1078.5, 329.5], [1091.5, 329.5], [1104.5, 339.5], [1078.5, 375.5], [1104.5, 375.5], [1104.5, 413.5], [1078.5, 425.5], [1091.5, 425.5], [1119.5, 448.5], [1104.5, 481.5], [1119.5, 481.5], [1205.5, 481.5], [1238.5, 481.5], [1164.5, 314.5], [1164.5, 423.5]);
  // output stage
  V(1205.5, 271, 481, r(280.5), q(314.5), r(339.5), r(386.5), q(423.5), r(468.5));
  [280.5, 339.5, 386.5, 468.5].forEach(y => RV(1205.5, y)); Q(1197.5, 314.5); Q(1197.5, 423.5, 1, 1);
  W('1205.5 304.5', '1211.5 304.5'); RH(1217.5, 304.5); W('1223.5 304.5', '1244.5 304.5', '1244.5 315.5'); W('1246.5 302.5', '1246.5 316.5'); W('1205.5 326.5', '1251.5 326.5', '1251.5 314.5', '1246.5 314.5'); W('1246.5 304.5', '1251.5 304.5', '1251.5 271.5'); W('1246.5 309.5', '1251.5 309.5', '1251.5 304.5');
  V(1235.5, 271, 304); D(1235.5, 278.5, 1); D(1235.5, 293.5, 1);
  W('1205.5 438.5', '1211.5 438.5'); RH(1217.5, 438.5); W('1223.5 438.5', '1247.5 438.5', '1247.5 428.5'); W('1249.5 426.5', '1249.5 440.5'); W('1205.5 408.5', '1253.5 408.5', '1253.5 428.5', '1249.5 428.5'); W('1249.5 438.5', '1253.5 438.5', '1253.5 481.5');
  V(1238.5, 438, 517); D(1238.5, 448.5, 1); D(1238.5, 466.5, 1); W('1238.5 517.5', '1278.5 517.5'); V(1278.5, 471, 517, [475, 485], [490, 500]); S(1278.5, 480.5); S(1278.5, 495.5); GU(1278.5, 472.5);
  W('1238.5 271.5', '1238.5 240.5', '1283.5 240.5'); V(1283.5, 240, 281, [242, 252], [257, 267]); S(1283.5, 247.5); S(1283.5, 262.5); GD(1283.5, 281.5);
  W('1205.5 367.5', '1327.5 367.5'); V(1281.5, 342, 408, r(384.5)); RV(1281.5, 384.5); GD(1281.5, 408.5); V(1324.5, 364, 403, r(384.5)); RV(1324.5, 384.5); W('1281.5 403.5', '1356 403.5'); W('1281.5 342.5', '1292.5 342.5'); RH(1298.5, 342.5); W('1304.5 342.5', '1356 342.5');
  dot([1205.5, 288.5], [1205.5, 304.5], [1235.5, 304.5], [1205.5, 326.5], [1205.5, 367.5], [1258.5, 367.5], [1281.5, 367.5], [1324.5, 367.5], [1205.5, 408.5], [1205.5, 438.5], [1238.5, 438.5], [1205.5, 451.5], [1281.5, 403.5], [1324.5, 403.5]);

  [[1072, 207, ';noise V(vout) V3 oct 100 20 20K'], [1190, 208, ';.temp 20 30 40 50'], [842, 217, '.include cordell-models1.txt'], [842, 226, '.include irfmodels.txt'],
   [972, 220, '.meas total_output_refered_rms_noise INTEG V(onoise)'], [972, 228, '.meas total_input_refered_rms_noise INTEG V(inoise)'],
   [752, 335, ';tran .04ms'], [806, 259, 'D1'], [806, 269, 'red'], [835, 250, 'R4'], [835, 256, '750'], [883, 255, 'R5'], [883, 262, '1k'], [919, 260, 'R2'], [919, 266, '47k'],
   [835, 283, 'bc860c'], [835, 289, 'Q17'], [849, 281, 'BC856B_D'], [869, 287, 'Q4'], [919, 299, 'BC860c'], [919, 305, 'Q21'], [808, 339, 'R10'], [808, 345, '5k6'], [835, 346, 'R17'], [835, 352, '4r7'],
   [889, 332, 'BC850c'], [879, 338, 'Q3'], [811, 359, 'R56'], [813, 371, '10'], [835, 362, 'BC860c'], [835, 368, 'Q11'], [884, 357, 'R44'], [884, 363, '4.7'], [897, 367, 'R19'], [897, 379, '2k2'],
   [811, 387, 'R57'], [813, 399, '10'], [831, 391, 'Q12'], [831, 397, 'BC850c'], [857, 382, 'C3'], [853, 390, '0.1µ'], [884, 387, 'R45'], [884, 393, '4.7'], [835, 407, 'R46'], [835, 413, '4r7'],
   [747, 397, 'R51'], [747, 409, '100'], [736, 400, 'vin'], [780, 417, 'C16'], [780, 425, '100p'], [800, 417, 'R50'], [800, 423, '47k'], [745, 431, 'V3'], [745, 444, 'SINE(0 2.8 {freq})'], [745, 452, 'AC 1'],
   [884, 424, 'Q4'], [861, 431, 'BC860c'], [831, 467, 'Q19'], [831, 473, 'BC850C'], [874, 472, 'Q2'], [854, 478, 'BC846B_D'], [806, 487, 'D4'], [806, 497, 'red'], [835, 496, 'R31'], [835, 502, '750'], [883, 496, 'R6'], [883, 502, '1k'],
   [940, 320, 'Q9'], [940, 326, 'BC850c'], [944, 352, 'R18'], [944, 357, '150k'], [998, 255, 'R14'], [998, 262, '1k'], [1014, 258, 'C4'], [1014, 266, '100µ'], [1041, 251, 'V8'], [1041, 264, '20'],
   [998, 281, 'BC856B_D'], [998, 287, 'Q5'], [998, 314, 'R36'], [998, 319, '100'], [998, 329, 'BC860c'], [998, 335, 'Q6'], [974, 365, 'C2'], [975, 385, '10p'], [998, 369, 'R28'], [998, 381, '100'], [1022, 372, 'vout1'], [1051, 407, 'P1'], [1051, 413, '10k'],
   [993, 416, 'Q8'], [993, 422, 'BC850c'], [944, 428, 'BC860c'], [944, 434, 'Q10'], [998, 438, 'R38'], [998, 443, '100'], [915, 452, 'Q22'], [915, 458, 'BC850c'], [993, 472, 'Q7'], [993, 478, 'BC846B_D'], [919, 496, 'R12'], [919, 502, '47k'], [998, 499, 'R16'], [998, 505, '1k'],
   [1014, 491, 'C11'], [1014, 499, '100µ'], [1041, 490, 'V9'], [1041, 502, '20'],
   [1081, 278, 'R15'], [1081, 283, '560'], [1054, 296, 'BC860C'], [1064, 302, 'Q23'], [1120, 280, 'D2'], [1120, 289, 'red'], [1122, 311, 'P2'], [1122, 317, '5k'], [1092, 316, 'C8'], [1092, 324, '47p'], [1102, 327, 'Q16'], [1102, 333, 'BC846B_D'],
   [1081, 339, 'R8'], [1081, 345, '520'], [1107, 346, 'R11'], [1107, 352, '220'], [1081, 357, 'BC856B_D'], [1081, 363, 'Q15'], [1066, 367, 'R29'], [1066, 372, '10'], [1066, 382, 'R32'], [1066, 388, '10'], [1077, 391, 'Q18'], [1077, 397, 'BC846B_D'],
   [1122, 392, 'R7'], [1122, 398, '8k'], [1107, 402, 'R13'], [1107, 408, '220'], [1081, 407, 'R9'], [1081, 413, '520'], [1107, 423, 'BC856B_D'], [1107, 429, 'Q20'], [1091, 431, 'C12'], [1091, 439, '47p'], [1068, 447, 'Q24'], [1058, 452, 'BC850C'], [1081, 468, 'R20'], [1081, 474, '560'], [1120, 462, 'D3'], [1120, 472, 'red'],
   [1153, 334, 'R21'], [1155, 346, '10'], [1153, 407, 'R30'], [1155, 419, '10'], [1166, 298, 'C1'], [1166, 306, '47p'], [1166, 433, 'C5'], [1166, 440, '47p'], [1208, 278, 'R22'], [1208, 284, '330'], [1180, 323, 'BC850C'], [1200, 315, 'Q13'], [1211, 298, 'R24'], [1211, 310, '100'],
   [1237, 274, 'D5'], [1237, 284, '1N4148'], [1227, 289, 'D7'], [1239, 296, 'BZX84B12VL'], [1252, 306, 'IRF9610 temp={t}'], [1252, 312, 'M1'], [1287, 241, 'V4'], [1287, 256, 'V1'], [1287, 269, '20'],
   [1208, 336, 'R1'], [1208, 342, '0.22'], [1208, 384, 'R3'], [1208, 390, '0.22'], [1266, 364, 'vout'], [1292, 336, 'R34'], [1294, 348, '47'], [1299, 339, 'lineout'], [1326, 339, 'vout2'], [1284, 382, 'R25'], [1284, 388, '22k'], [1327, 382, 'R26'], [1327, 388, '8'],
   [1181, 414, 'BC860C'], [1208, 426, 'Q14'], [1211, 432, 'R27'], [1211, 444, '100'], [1254, 431, 'M2'], [1254, 438, 'IRF610 temp={t}'], [1239, 444, 'D6'], [1239, 454, '1N4148'], [1230, 462, 'D8'], [1221, 473, 'BZX84B12VL'], [1208, 467, 'R23'], [1208, 472, '330'],
   [1281, 474, 'V5'], [1281, 490, 'V2'], [1281, 502, '20'], [1166, 530, 'V6'], [1167, 543, '15'], [1181, 531, 'C9'], [1179, 538, '22µ'], [1144, 541, 'C13'], [1146, 554, '1µ'], [1168, 551, 'U1'], [1155, 561, 'LT1022'], [1166, 568, 'V7'], [1167, 581, '15'], [1179, 572, 'C10'], [1179, 580, '22µ'], [1261, 542, 'R47'], [1261, 547, '1Meg']
  ].forEach(t => T(...t));
  ['.options plo', '.options cal', '.options me', '.options nu', '.param Freq', '.param num', '.param dlycy', '.param FFT=', '.param simti', '.param dlyti', '.param time', '.four {Freq}', '.four {Freq}', ';', '.tran 0 {sim', '', '.option num', '', '.option relto', '.option ptra', ';ac dec 1k .1']
    .forEach((s, i) => T(1319, 431 + Math.round(i * 7.95), s));
  [[694, 315, 'E=16 uV full out'], [694, 330, 'Output impedance = 0.113 ohm'], [747, 358, 'SINE(0 .2 {freq})'], [694, 382, '0ns 10ns .005ms .01ms 8)'], [987, 237, '20V'], [921, 280, '17.438779V'], [996, 305, '17.095769V'], [996, 454, '17.091855V'], [928, 470, '-17.434983V'], [1004, 514, '-20V'], [1225, 364, '-126.83695nV'], [1050, 559, '50.612634mV']].forEach(t => T(...t, 'op'));
  TV(830, 285, '1.5622541mA'); TV(803, 344, '6.4958602mA'); TV(830, 344, '-1.5584581mA'); TV(880, 287, '1.8058777mA'); TV(993, 287, '1.8057726mA'); TV(993, 379, '1.1176602mA'); TV(1203, 382, '1.1286217A');
  document.getElementById('sch').innerHTML = path(d, ink) + `<path d="${solid}" fill="#0000d0"/>` + txt;
})();
</script>
</body>
</html>
